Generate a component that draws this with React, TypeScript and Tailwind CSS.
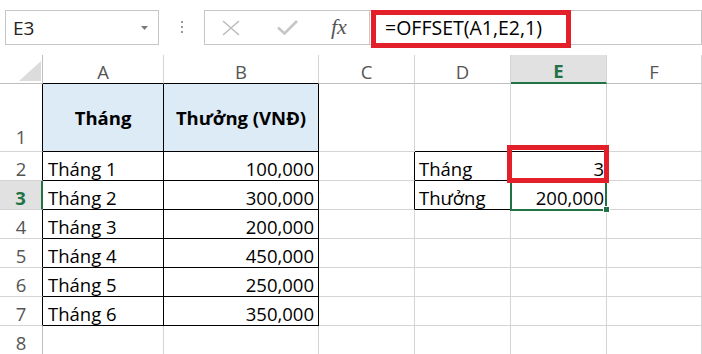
import React from 'react';

type Cell = { t?: string; c: string };

// grid line colours
// gray gridline #d4d4d4, table border black, selection green #217346

const rows: Cell[][] = [
  [
    { c: 'justify-end items-end pr-[1px] pb-[2px] border-r-[#bfbfbf] border-b-[#bfbfbf]' },
    { t: 'A', c: 'justify-center items-end text-[#555] border-r-[#d4d4d4] border-b-black' },
    { t: 'B', c: 'justify-center items-end text-[#555] border-r-[#d4d4d4] border-b-black' },
    { t: 'C', c: 'justify-center items-end text-[#555] border-r-[#d4d4d4] border-b-[#bfbfbf]' },
    { t: 'D', c: 'justify-center items-end text-[#555] border-r-[#d4d4d4] border-b-[#bfbfbf]' },
    { t: 'E', c: 'justify-center items-end bg-[#e1e1e1] font-bold text-[#217346] border-r-[#d4d4d4] border-b-2 border-b-[#217346]' },
    { t: 'F', c: 'justify-center items-end text-[#555] border-r-[#d4d4d4] border-b-[#bfbfbf]' },
  ],
  [
    { t: '1', c: 'justify-center items-end pb-[3px] text-[#555] border-r-black border-b-[#d4d4d4]' },
    { t: 'Tháng', c: 'justify-center items-center bg-[#ddebf7] font-bold border-r-black border-b-black' },
    { t: 'Thưởng (VNĐ)', c: 'justify-center items-center bg-[#ddebf7] font-bold border-r-black border-b-black' },
    { c: 'border-r-[#d4d4d4] border-b-[#d4d4d4]' },
    { c: 'border-r-[#d4d4d4] border-b-black' },
    { c: 'border-r-[#d4d4d4] border-b-black' },
    { c: 'border-r-[#d4d4d4] border-b-[#d4d4d4]' },
  ],
  [
    { t: '2', c: 'justify-center items-end text-[#555] border-r-black border-b-[#d4d4d4]' },
    { t: 'Tháng 1', c: 'items-end pl-[5px] border-r-black border-b-black' },
    { t: '100,000', c: 'justify-end items-end pr-[4px] border-r-black border-b-black' },
    { c: 'border-r-black border-b-[#d4d4d4]' },
    { t: 'Tháng', c: 'items-end pl-[4px] border-r-black border-b-black' },
    { t: '3', c: 'justify-end items-end pr-[2px] border-r-black border-b-black' },
    { c: 'border-r-[#d4d4d4] border-b-[#d4d4d4]' },
  ],
  [
    { t: '3', c: 'justify-center items-end bg-[#e1e1e1] font-bold text-[#217346] border-r-2 border-r-[#217346] border-b-[#d4d4d4]' },
    { t: 'Tháng 2', c: 'items-end pl-[5px] border-r-black border-b-black' },
    { t: '300,000', c: 'justify-end items-end pr-[4px] border-r-black border-b-black' },
    { c: 'border-r-black border-b-[#d4d4d4]' },
    { t: 'Thưởng', c: 'items-end pl-[4px] border-r-black border-b-black' },
    { t: '200,000', c: 'justify-end items-end pr-[2px] border-r-black border-b-black' },
    { c: 'border-r-[#d4d4d4] border-b-[#d4d4d4]' },
  ],
];

const data = [
  ['4', 'Tháng 3', '200,000'],
  ['5', 'Tháng 4', '450,000'],
  ['6', 'Tháng 5', '250,000'],
  ['7', 'Tháng 6', '350,000'],
];

data.forEach(([n, m, v]) => {
  rows.push([
    { t: n, c: 'justify-center items-end text-[#555] border-r-black border-b-[#d4d4d4]' },
    { t: m, c: 'items-end pl-[5px] border-r-black border-b-black' },
    { t: v, c: 'justify-end items-end pr-[4px] border-r-black border-b-black' },
    { c: 'border-r-[#d4d4d4] border-b-[#d4d4d4]' },
    { c: 'border-r-[#d4d4d4] border-b-[#d4d4d4]' },
    { c: 'border-r-[#d4d4d4] border-b-[#d4d4d4]' },
    { c: 'border-r-[#d4d4d4] border-b-[#d4d4d4]' },
  ]);
});

rows.push([
  { t: '8', c: 'justify-center items-end text-[#555] border-r-[#bfbfbf] border-b-[#d4d4d4]' },
  { c: 'border-r-[#d4d4d4] border-b-[#d4d4d4]' },
  { c: 'border-r-[#d4d4d4] border-b-[#d4d4d4]' },
  { c: 'border-r-[#d4d4d4] border-b-[#d4d4d4]' },
  { c: 'border-r-[#d4d4d4] border-b-[#d4d4d4]' },
  { c: 'border-r-[#d4d4d4] border-b-[#d4d4d4]' },
  { c: 'border-r-[#d4d4d4] border-b-[#d4d4d4]' },
]);

function FormulaBar() {
  return (
    <div className="flex items-start pt-[10px] h-[55px]">
      <div className="ml-[5px] w-[154px] h-[35px] border border-[#c6c6c6] flex items-center justify-between pl-[7px] pr-[10px]">
        <span className="text-[19px] leading-none pt-[2px] text-[#222]">E3</span>
        <svg width="7" height="4" viewBox="0 0 7 4">
          <path d="M0 0 L7 0 L3.5 4 Z" fill="#7a7a7a" />
        </svg>
      </div>
      <div className="w-[45px] h-[35px] flex flex-col items-center pt-[11px] gap-[3px]">
        <div className="w-[2px] h-[2px] bg-[#9a9a9a]" />
        <div className="w-[2px] h-[2px] bg-[#9a9a9a]" />
        <div className="w-[2px] h-[2px] bg-[#9a9a9a]" />
      </div>
      <div className="w-[166px] h-[35px] border border-[#c6c6c6] flex items-center pl-[17px]">
        <svg width="18" height="16" viewBox="0 0 18 16">
          <path d="M1 1 L17 15 M17 1 L1 15" stroke="#bdbdbd" strokeWidth="1.6" fill="none" />
        </svg>
        <svg className="ml-[37px]" width="21" height="15" viewBox="0 0 21 15">
          <path d="M1 7.5 L7.5 13.5 L20 1" stroke="#c6c6c6" strokeWidth="2.6" fill="none" />
        </svg>
        <span className="ml-[33px] font-['Liberation_Serif',serif] italic text-[22px] leading-none text-[#555] pb-[2px]">
          fx
        </span>
      </div>
      <div className="relative flex-1 h-[35px] border-y border-r border-[#c6c6c6] flex items-center pl-[15px]">
        <span className="text-[19.5px] leading-none pt-[1px] text-black">=OFFSET(A1,E2,1)</span>
        <div className="absolute left-[1px] top-[-1px] w-[200px] h-[38px] border-[5px] border-[#e3202a]" />
      </div>
    </div>
  );
}

export default function App() {
  return (
    <div className="w-[702px] h-[354px] overflow-hidden bg-white font-['Open_Sans',sans-serif] text-black">
      <FormulaBar />
      <div className="relative">
        <div className="grid grid-cols-[43px_121px_155px_96px_96px_96px_95px] grid-rows-[29px_68px_repeat(7,29px)] text-[18.5px] leading-[22px]">
          {rows.map((r, i) =>
            r.map((cell, j) => (
              <div
                key={`${i}-${j}`}
                className={`flex whitespace-nowrap border-r border-b ${cell.c}`}
              >
                {i === 0 && j === 0 ? (
                  <svg width="22" height="20" viewBox="0 0 22 20">
                    <path d="M22 0 L22 20 L0 20 Z" fill="#dcdcdc" />
                  </svg>
                ) : (
                  cell.t
                )}
              </div>
            ))
          )}
        </div>
        {/* selected cell E3 */}
        <div className="absolute left-[510px] top-[125px] w-[97px] h-[31px] border-2 border-[#217346]" />
        <div className="absolute left-[603px] top-[151px] w-[7px] h-[7px] bg-[#217346] border border-white" />
        {/* red highlight on E2 */}
        <div className="absolute left-[507px] top-[90px] w-[102px] h-[38px] border-[5px] border-[#e3202a]" />
      </div>
    </div>
  );
}
